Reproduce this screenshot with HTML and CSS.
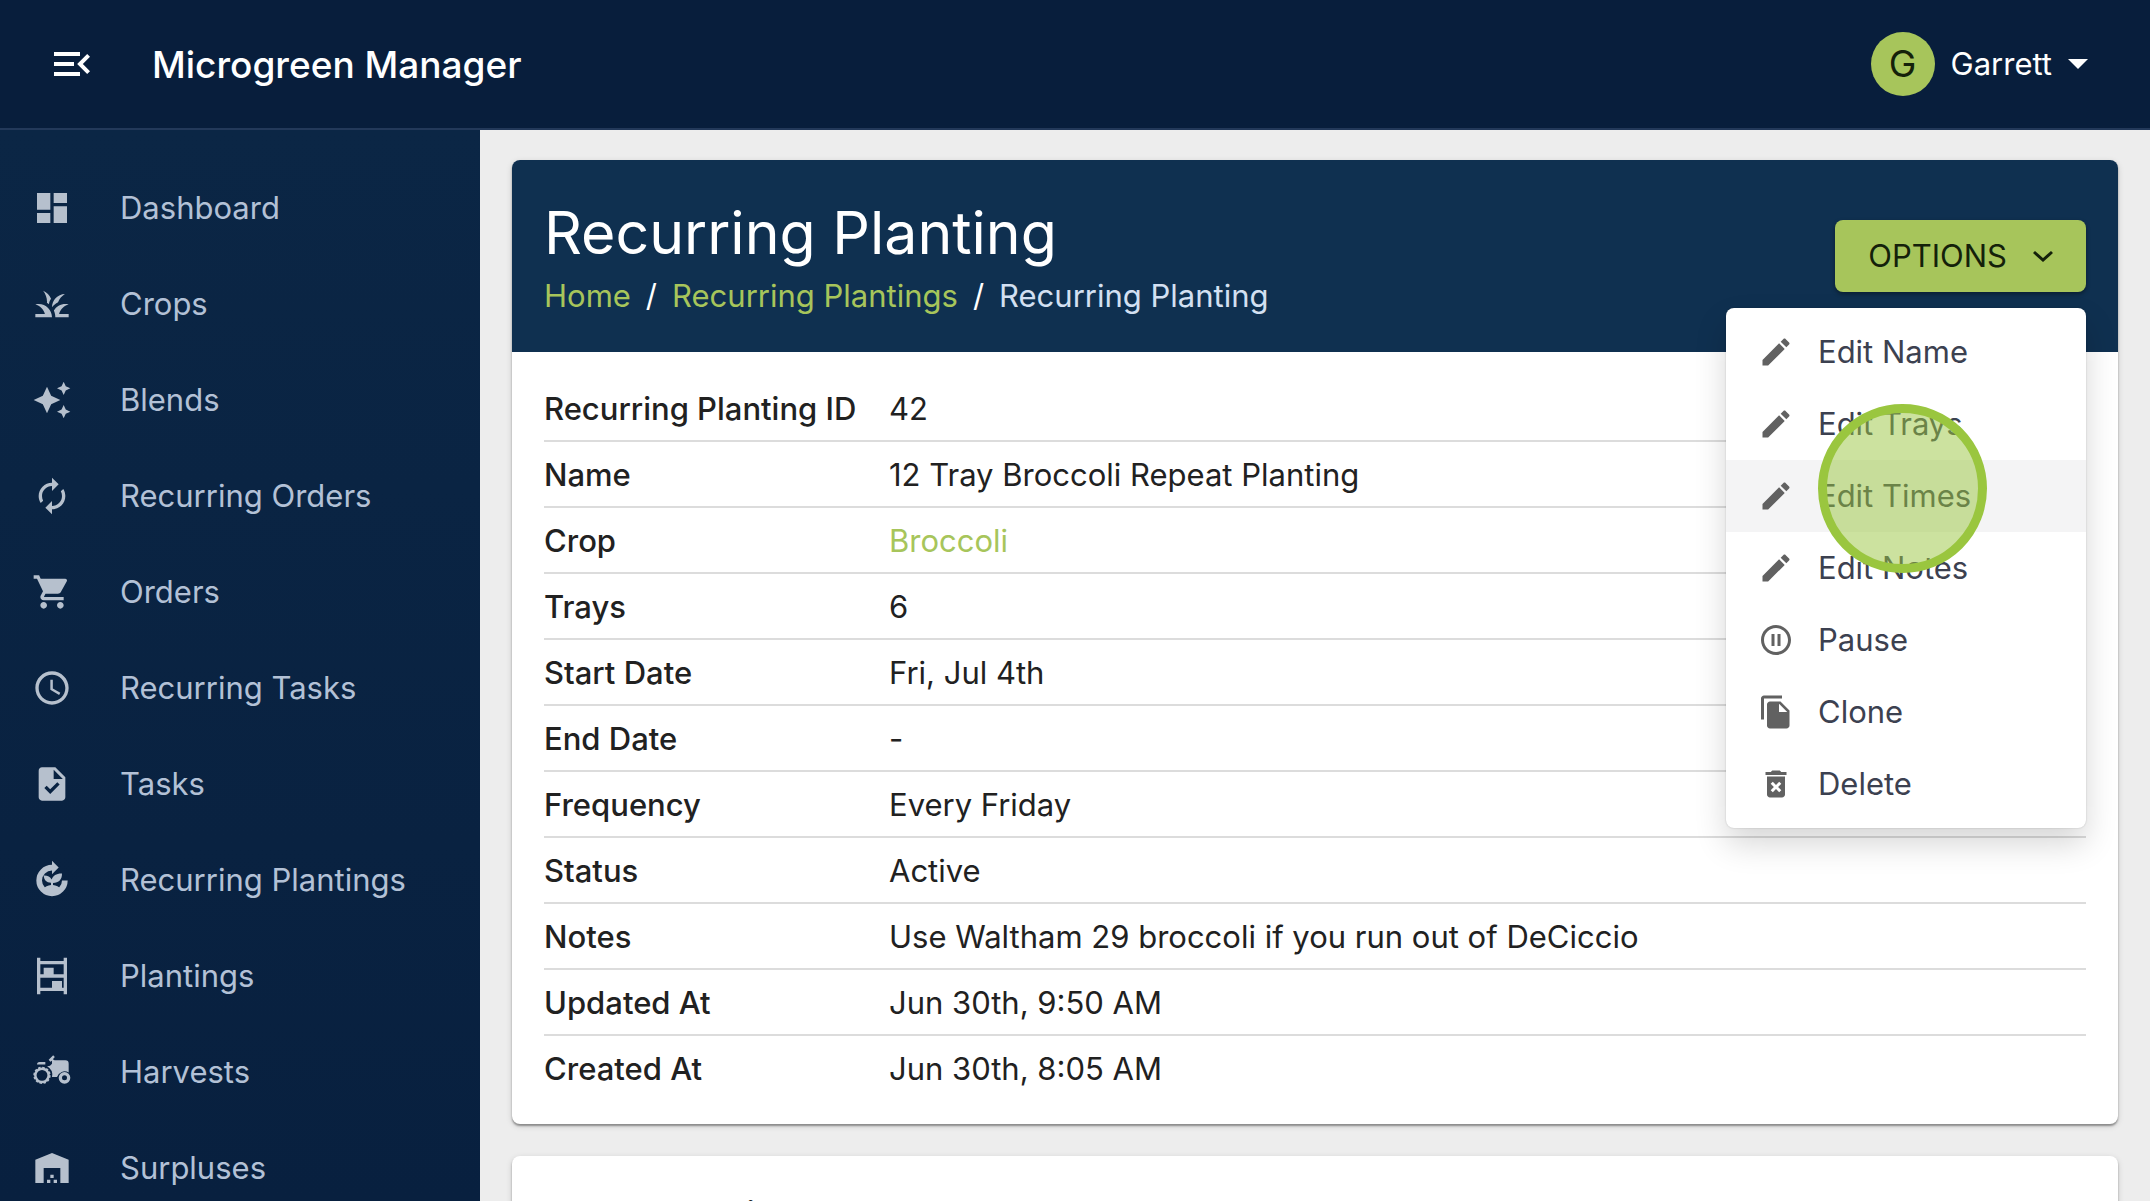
FILE: index.html
```html
<!DOCTYPE html>
<html lang="en">
  <head>
    <meta charset="UTF-8" />
    <meta name="viewport" content="width=device-width, initial-scale=1.0" />
    <title>Recurring Planting - Microgreen Manager</title>
    <link rel="stylesheet" href="styles.css">
  </head>
  <body>
    <header class="topbar">
      <button type="button" class="menu-toggle" aria-label="Collapse menu">
        <svg class="icon" viewBox="0 0 24 24"><path d="M3 18h13v-2H3v2zM3 13h10v-2H3v2zm0-7v2h13V6H3zm18 9.590L17.420 12 21 8.410 19.590 7l-5 5 5 5L21 15.590z" /></svg>
      </button>
      <div class="brand">Microgreen Manager</div>
      <button type="button" class="user">
        <span class="avatar">G</span>
        <span>Garrett</span>
        <svg class="caret" viewBox="0 0 20 10"><path d="M0 0h20L10 10z" /></svg>
      </button>
    </header>

    <div class="layout">
      <nav class="sidebar">
        <a href="#">
          <svg class="icon" viewBox="0 0 24 24"><path d="M3 13h8V3H3v10zm0 8h8v-6H3v6zm10 0h8V11h-8v10zm0-18v6h8V3h-8z" /></svg>
          Dashboard
        </a>
        <a href="#">
          <svg class="icon" viewBox="0 0 24 24"><path d="M12 20H2v-2h5.750C7 15.190 4.810 12.990 2 12.260 2.640 12.100 3.310 12 4 12c4.420 0 8 3.580 8 8zm10-7.740C21.360 12.090 20.690 12 20 12c-2.930 0-5.480 1.580-6.880 3.930.29.66.530 1.350.670 2.070.13.650.210 1.320.210 2h8v-2h-5.750c.740-2.810 2.940-5.010 5.750-5.740zm-6.360-1.240c.78-2.090 2.230-3.840 4.090-5C15.440 6.160 12 9.670 12 14v.020c.950-1.270 2.200-2.300 3.640-3zM11.420 8.850C10.580 6.660 8.880 4.890 6.700 4 8.140 5.860 9 8.180 9 10.710c0 .210-.030.410-.040.610.430.240.830.520 1.220.820.120-1.180.550-2.300 1.240-3.290z" /></svg>
          Crops
        </a>
        <a href="#">
          <svg class="icon" viewBox="0 0 24 24"><path d="M19 9l1.250-2.750L23 5l-2.750-1.250L19 1l-1.250 2.750L15 5l2.750 1.250L19 9zm-7.500.500L9 4 6.500 9.500 1 12l5.500 2.500L9 20l2.500-5.500L17 12l-5.500-2.500zM19 15l-1.250 2.750L15 19l2.750 1.250L19 23l1.250-2.750L23 19l-2.750-1.250L19 15z" /></svg>
          Blends
        </a>
        <a href="#">
          <svg class="icon" viewBox="0 0 24 24"><path d="M12 6v3l4-4-4-4v3c-4.420 0-8 3.580-8 8 0 1.570.460 3.030 1.240 4.260L6.700 14.800c-.450-.830-.700-1.790-.700-2.800 0-3.310 2.690-6 6-6zm6.760 1.740L17.300 9.200c.440.840.700 1.790.700 2.800 0 3.310-2.690 6-6 6v-3l-4 4 4 4v-3c4.420 0 8-3.580 8-8 0-1.570-.460-3.030-1.240-4.260z" /></svg>
          Recurring Orders
        </a>
        <a href="#">
          <svg class="icon" viewBox="0 0 24 24"><path d="M7 18c-1.100 0-1.990.9-1.990 2S5.900 22 7 22s2-.9 2-2-.9-2-2-2zM1 2v2h2l3.600 7.590-1.350 2.450c-.160.280-.250.610-.250.960 0 1.100.9 2 2 2h12v-2H7.420c-.140 0-.250-.110-.250-.250l.030-.120.9-1.630h7.450c.750 0 1.410-.410 1.750-1.030l3.580-6.490c.080-.140.120-.310.120-.480 0-.550-.450-1-1-1H5.210l-.940-2H1zm16 16c-1.100 0-1.990.9-1.990 2s.89 2 1.990 2 2-.9 2-2-.9-2-2-2z" /></svg>
          Orders
        </a>
        <a href="#">
          <svg class="icon" viewBox="0 0 24 24"><path d="M11.990 2C6.470 2 2 6.480 2 12s4.470 10 9.990 10C17.520 22 22 17.520 22 12S17.520 2 11.990 2zM12 20c-4.420 0-8-3.580-8-8s3.580-8 8-8 8 3.580 8 8-3.580 8-8 8zm.500-13H11v6l5.250 3.150.750-1.230-4.500-2.670z" /></svg>
          Recurring Tasks
        </a>
        <a href="#">
          <svg class="icon" viewBox="0 0 24 24"><path d="M14 2H6c-1.100 0-1.990.9-1.990 2L4 20c0 1.100.890 2 1.990 2H18c1.100 0 2-.9 2-2V8l-6-6zm-3.060 16L7.400 14.460l1.410-1.410 2.120 2.120 4.240-4.240 1.410 1.410L10.940 18zM13 9V3.500L18.500 9H13z" /></svg>
          Tasks
        </a>
        <a href="#">
          <svg class="icon" viewBox="0 0 24 24">
            <path d="M12 4.600A7.700 7.700 0 1 0 19.700 12.300" fill="none" stroke="currentColor" stroke-width="3.400" />
            <path d="M12 .5l4 4-4 4z" />
            <path d="M6.500 17.500Q8.500 15.200 11.400 15v-1.300C8.600 13.500 7.200 12 7 9.300c2.300-.1 3.900.7 4.800 2.400.8-2.400 2.900-3.700 6.200-3.600.1 3.600-1.900 5.600-5.400 5.700V15q2.900.2 4.900 2.500L12 21z" />
          </svg>
          Recurring Plantings
        </a>
        <a href="#">
          <svg class="icon" viewBox="0 0 24 24"><path d="M3 1v22h2v-2h14v2h2V1h-2v2H5V1zm2 4h14v6h-6V7H7v4H5zm0 8h14v6h-1v-4h-6v4H5z" /></svg>
          Plantings
        </a>
        <a href="#">
          <svg class="icon" viewBox="0 0 24 24">
            <path d="M3 7.500Q3 6 4.500 6H8v1.500zM10 4.700l2.700-2.700 1 1-1.200 1.300L13.500 5H20q2 0 2 2v5.300a4.800 4.800 0 0 0-7 2.700h-3a6 6 0 0 0-3-6.500q1.800.2 3-1.500V5.200l-1 .7z" />
            <circle cx="6" cy="14" r="4" fill="none" stroke="currentColor" stroke-width="1.500" />
            <circle cx="6" cy="14" r="4.700" fill="none" stroke="currentColor" stroke-width="1" stroke-dasharray="1.460 1" />
            <circle cx="19.500" cy="15.500" r="2.500" fill="none" stroke="currentColor" stroke-width="2" />
          </svg>
          Harvests
        </a>
        <a href="#">
          <svg class="icon" viewBox="0 0 24 24"><path d="M2 21V7l10-4 10 4v14h-5v-9H7v9zm7-2h2v2H9zm2-3h2v2h-2zm2 3h2v2h-2z" /></svg>
          Surpluses
        </a>
      </nav>

      <main class="content">
        <section class="card">
          <div class="card-header">
            <div>
              <h1>Recurring Planting</h1>
              <nav class="breadcrumbs">
                <a href="#">Home</a>
                <span>/</span>
                <a href="#">Recurring Plantings</a>
                <span>/</span>
                <span class="current">Recurring Planting</span>
              </nav>
            </div>
            <div class="options">
              <button type="button" class="options-button">
                OPTIONS
                <svg class="chevron" viewBox="0 0 20 12"><path d="M1 2l9 8 9-8" /></svg>
              </button>
              <div class="options-menu">
                <button type="button">
                  <svg class="icon" viewBox="0 0 24 24"><path d="M3 17.250V21h3.750L17.810 9.940l-3.750-3.750L3 17.250zM20.710 7.040c.390-.390.390-1.020 0-1.410l-2.340-2.340c-.390-.390-1.020-.390-1.410 0l-1.830 1.830 3.750 3.750 1.830-1.830z" /></svg>
                  Edit Name
                </button>
                <button type="button">
                  <svg class="icon" viewBox="0 0 24 24"><path d="M3 17.250V21h3.750L17.810 9.940l-3.750-3.750L3 17.250zM20.710 7.040c.390-.390.390-1.020 0-1.410l-2.340-2.340c-.390-.390-1.020-.390-1.410 0l-1.830 1.830 3.750 3.750 1.830-1.830z" /></svg>
                  Edit Trays
                </button>
                <button type="button" class="active">
                  <svg class="icon" viewBox="0 0 24 24"><path d="M3 17.250V21h3.750L17.810 9.940l-3.750-3.750L3 17.250zM20.710 7.040c.390-.390.390-1.020 0-1.410l-2.340-2.340c-.390-.390-1.020-.390-1.410 0l-1.830 1.830 3.750 3.750 1.830-1.830z" /></svg>
                  Edit Times
                  <span class="click-marker"></span>
                </button>
                <button type="button">
                  <svg class="icon" viewBox="0 0 24 24"><path d="M3 17.250V21h3.750L17.810 9.940l-3.750-3.750L3 17.250zM20.710 7.040c.390-.390.390-1.020 0-1.410l-2.340-2.340c-.390-.390-1.020-.390-1.410 0l-1.830 1.830 3.750 3.750 1.830-1.830z" /></svg>
                  Edit Notes
                </button>
                <button type="button">
                  <svg class="icon" viewBox="0 0 24 24"><path d="M9 16h2V8H9v8zm3-14C6.480 2 2 6.480 2 12s4.480 10 10 10 10-4.480 10-10S17.520 2 12 2zm0 18c-4.410 0-8-3.590-8-8s3.590-8 8-8 8 3.590 8 8-3.590 8-8 8zm1-4h2V8h-2v8z" /></svg>
                  Pause
                </button>
                <button type="button">
                  <svg class="icon" viewBox="0 0 24 24"><path d="M16 1H4c-1.100 0-2 .9-2 2v14h2V3h12V1zm-1 4l6 6v10c0 1.100-.9 2-2 2H7.990C6.890 23 6 22.100 6 21l.010-14c0-1.100.890-2 1.990-2h7zm-1 7h5.500L14 6.500V12z" /></svg>
                  Clone
                </button>
                <button type="button">
                  <svg class="icon" viewBox="0 0 24 24"><path d="M6 19c0 1.100.9 2 2 2h8c1.100 0 2-.9 2-2V7H6v12zm2.460-7.120l1.410-1.410L12 12.590l2.120-2.120 1.410 1.410L13.410 14l2.120 2.120-1.410 1.410L12 15.410l-2.120 2.120-1.410-1.410L10.590 14l-2.130-2.120zM15.500 4l-1-1h-5l-1 1H5v2h14V4z" /></svg>
                  Delete
                </button>
              </div>
            </div>
          </div>

          <table class="details">
            <tr><th scope="row">Recurring Planting ID</th><td>42</td></tr>
            <tr><th scope="row">Name</th><td>12 Tray Broccoli Repeat Planting</td></tr>
            <tr><th scope="row">Crop</th><td><a href="#">Broccoli</a></td></tr>
            <tr><th scope="row">Trays</th><td>6</td></tr>
            <tr><th scope="row">Start Date</th><td>Fri, Jul 4th</td></tr>
            <tr><th scope="row">End Date</th><td>-</td></tr>
            <tr><th scope="row">Frequency</th><td>Every Friday</td></tr>
            <tr><th scope="row">Status</th><td>Active</td></tr>
            <tr><th scope="row">Notes</th><td>Use Waltham 29 broccoli if you run out of DeCiccio</td></tr>
            <tr><th scope="row">Updated At</th><td>Jun 30th, 9:50 AM</td></tr>
            <tr><th scope="row">Created At</th><td>Jun 30th, 8:05 AM</td></tr>
          </table>
        </section>

        <section class="card planned">
          <h2>Planned Plantings</h2>
        </section>
      </main>
    </div>
  </body>
</html>
```

FILE: styles.css
```css
* {
  box-sizing: border-box;
}

body {
  display: flex;
  flex-direction: column;
  height: 100vh;
  margin: 0;
  overflow: hidden;
  background-color: #ededed;
  color: #212121;
  font-family: Inter, "Liberation Sans", sans-serif;
  font-size: 31px;
  line-height: 48px;
}

button {
  padding: 0;
  border: none;
  background: none;
  color: inherit;
  font: inherit;
  cursor: pointer;
}

a {
  color: #a7c55b;
  text-decoration: none;
}

.icon {
  display: block;
  flex: none;
  width: 40px;
  height: 40px;
  fill: currentColor;
}

/* Top bar */
.topbar {
  display: flex;
  flex: none;
  align-items: center;
  padding: 32px 62px 32px 48px;
  border-bottom: 2px solid #23395a;
  background-color: #081e3c;
  color: #fff;
}

.menu-toggle {
  margin-right: 56px;
}

.menu-toggle .icon {
  width: 48px;
  height: 48px;
}

.brand {
  padding-top: 2px;
  font-size: 37px;
  font-weight: 500;
}

.user {
  display: flex;
  align-items: center;
  gap: 16px;
  margin-left: auto;
}

.avatar {
  width: 64px;
  height: 64px;
  border-radius: 50%;
  background-color: #a7c55b;
  color: #14210a;
  font-size: 37px;
  line-height: 64px;
}

.caret {
  width: 20px;
  height: 10px;
  fill: #fff;
}

/* Sidebar */
.layout {
  display: flex;
  flex: 1;
  min-height: 0;
}

.sidebar {
  flex: none;
  width: 480px;
  padding-top: 30px;
  overflow: hidden;
  background: linear-gradient(#0b2645, #08203f);
}

.sidebar a {
  display: flex;
  align-items: center;
  gap: 48px;
  height: 96px;
  padding-left: 32px;
  color: #b3c1d6;
}

.sidebar .icon {
  color: #b6c0cd;
}

/* Content */
.content {
  flex: 1;
  min-width: 0;
  padding: 30px 32px;
  overflow: hidden;
}

.card {
  margin-bottom: 32px;
  border-radius: 8px;
  background-color: #fff;
  box-shadow: 0 2px 2px rgba(0, 0, 0, 0.35), 0 2px 6px rgba(0, 0, 0, 0.15);
}

.card-header {
  display: flex;
  align-items: center;
  justify-content: space-between;
  padding: 32px;
  border-radius: 8px 8px 0 0;
  background-color: #0f3050;
  color: #fff;
}

h1 {
  margin: 0;
  padding-top: 2px;
  font-size: 59px;
  font-weight: 400;
  line-height: 78px;
}

.breadcrumbs {
  display: flex;
  gap: 15px;
}

.breadcrumbs .current {
  color: #d3e0f2;
}

/* Options menu */
.options {
  position: relative;
}

.options-button {
  display: flex;
  align-items: center;
  gap: 26px;
  padding: 12px 33px;
  border-radius: 8px;
  background-color: #a7c55b;
  box-shadow: 0 2px 4px rgba(0, 0, 0, 0.4);
  color: #14210a;
}

.chevron {
  width: 20px;
  height: 12px;
  fill: none;
  stroke: currentColor;
  stroke-width: 3;
}

.options-menu {
  position: absolute;
  z-index: 1;
  top: 100%;
  right: 0;
  width: 360px;
  margin-top: 16px;
  padding: 8px 0;
  border-radius: 8px;
  background-color: #fff;
  box-shadow: 0 0 2px rgba(0, 0, 0, 0.2), 0 16px 32px rgba(0, 0, 0, 0.16);
  color: #3c4150;
}

.options-menu button {
  position: relative;
  display: flex;
  align-items: center;
  gap: 24px;
  width: 100%;
  height: 72px;
  padding-left: 32px;
  text-align: left;
}

.options-menu .icon {
  width: 36px;
  height: 36px;
  color: #616161;
}

.options-menu .active {
  z-index: 1;
  background-color: #f4f4f5;
}

.click-marker {
  position: absolute;
  top: -56px;
  left: 92px;
  width: 169px;
  height: 169px;
  border: 9px solid #9ac63f;
  border-radius: 50%;
  background-color: rgba(154, 198, 63, 0.5);
}

/* Details */
.details {
  width: 100%;
  padding: 24px 32px;
  border-spacing: 0;
}

.details th,
.details td {
  height: 66px;
  padding: 9px 0 7px;
  border-bottom: 2px solid #dcdcdc;
  text-align: left;
}

.details th {
  width: 345px;
  font-weight: 500;
  white-space: nowrap;
}

.details tr:last-child th,
.details tr:last-child td {
  height: 64px;
  border-bottom: none;
}

/* Planned plantings */
.planned {
  padding: 33px 32px;
}

h2 {
  margin: 0;
  font-size: 31px;
  font-weight: 500;
  line-height: 48px;
}
```
